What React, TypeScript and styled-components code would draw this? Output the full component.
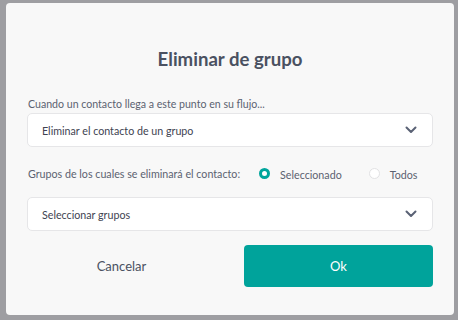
import React, { useState } from 'react'
import styled, { createGlobalStyle } from 'styled-components'

const GlobalStyle = createGlobalStyle`
  html, body {
    margin: 0;
    padding: 0;
    background: #9e9ea2;
    font-family: Lato, "Open Sans", "Liberation Sans", sans-serif;
  }
`

const Backdrop = styled.div`
  width: 458px;
  height: 320px;
  box-sizing: border-box;
  padding: 3px 4px 5px 6px;
  display: flex;
  background: #9e9ea2;
`

const Modal = styled.div`
  flex: 1;
  background: #f8f8f8;
  border-radius: 4px;
  padding: 0 21px;
  display: flex;
  flex-direction: column;
`

const Title = styled.h2`
  margin: 44px 0 0;
  font-size: 18.6px;
  line-height: 24px;
  font-weight: 700;
  color: #4a5161;
  text-align: center;
`

const Label = styled.div`
  margin-top: 25px;
  font-size: 10.6px;
  line-height: 16px;
  color: #5b6270;
  padding-left: 1px;
  white-space: nowrap;
`

const SelectBox = styled.div<{ $gap: number }>`
  margin-top: ${({ $gap }) => $gap}px;
  height: 34px;
  box-sizing: border-box;
  background: #fff;
  border: 1px solid #e6e6e8;
  border-radius: 5px;
  padding: 0 15px 0 14px;
  display: flex;
  align-items: center;
  justify-content: space-between;
  font-size: 10.7px;
  color: #3e4351;
`

const RadioRow = styled.div`
  margin-top: 16px;
  height: 20px;
  display: flex;
  align-items: center;
  font-size: 10.7px;
  color: #5b6270;
  padding-left: 1px;
  white-space: nowrap;
`

const RadioOption = styled.label<{ $offset: number }>`
  display: flex;
  align-items: center;
  margin-left: ${({ $offset }) => $offset}px;
  cursor: pointer;
`

const RadioDot = styled.span<{ $checked: boolean }>`
  width: 11px;
  height: 11px;
  box-sizing: border-box;
  border-radius: 50%;
  border: ${({ $checked }) => ($checked ? '3.5px solid #00a59c' : '1px solid #e2e2e4')};
  background: #fff;
  margin-right: 10px;
`

const RadioText = styled.span`
  margin-top: 2px;
`

const Buttons = styled.div`
  margin-top: 14px;
  display: grid;
  grid-template-columns: 1fr 1fr;
  gap: 28px;
`

const Button = styled.button<{ $primary?: boolean }>`
  height: 42px;
  border: none;
  border-radius: 4px;
  font-family: inherit;
  font-size: 13px;
  cursor: pointer;
  background: ${({ $primary }) => ($primary ? '#00a39b' : 'transparent')};
  color: ${({ $primary }) => ($primary ? '#ffffff' : '#4a5161')};
`

const Chevron = () => (
  <svg width="12" height="8" viewBox="0 0 12 8">
    <path d="M1.5 1.5 L6 6 L10.5 1.5" fill="none" stroke="#5a6275" strokeWidth="2" strokeLinecap="round" strokeLinejoin="round" />
  </svg>
)

export default function App() {
  const [mode, setMode] = useState<'sel' | 'all'>('sel')
  return (
    <>
      <GlobalStyle />
      <Backdrop>
        <Modal>
          <Title>Eliminar de grupo</Title>
          <Label>Cuando un contacto llega a este punto en su flujo...</Label>
          <SelectBox $gap={1}>
            <span>Eliminar el contacto de un grupo</span>
            <Chevron />
          </SelectBox>
          <RadioRow>
            <span>Grupos de los cuales se eliminará el contacto:</span>
            <RadioOption $offset={19} onClick={() => setMode('sel')}>
              <RadioDot $checked={mode === 'sel'} />
              <RadioText>Seleccionado</RadioText>
            </RadioOption>
            <RadioOption $offset={27} onClick={() => setMode('all')}>
              <RadioDot $checked={mode === 'all'} />
              <RadioText>Todos</RadioText>
            </RadioOption>
          </RadioRow>
          <SelectBox $gap={14}>
            <span>Seleccionar grupos</span>
            <Chevron />
          </SelectBox>
          <Buttons>
            <Button>Cancelar</Button>
            <Button $primary>Ok</Button>
          </Buttons>
        </Modal>
      </Backdrop>
    </>
  )
}
